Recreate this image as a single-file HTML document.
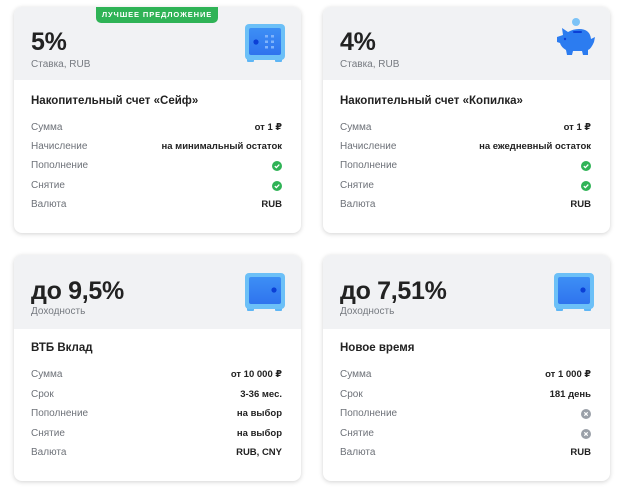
<!DOCTYPE html>
<html><head><meta charset="utf-8"><style>
*{margin:0;padding:0;box-sizing:border-box}
body{width:626px;height:494px;background:#fff;font-family:"Liberation Sans","DejaVu Sans",sans-serif;position:relative;overflow:hidden;color:#222}
.card{position:absolute;width:287px;height:226px;border-radius:8px;background:#fff;box-shadow:0 1px 5px rgba(0,0,0,.18);overflow:hidden}
.hd{position:absolute;left:0;top:0;right:0;height:73px;background:#f1f2f4}
.big{position:absolute;left:17px;font-weight:bold;font-size:25px;color:#222;letter-spacing:-.3px}
.sub{position:absolute;left:17px;font-size:10px;color:#767a80}
.ttl{position:absolute;left:17px;font-size:11.5px;font-weight:bold;color:#222}
.row{position:absolute;left:17px;right:19px;height:14px;font-size:10px}
.row .l{position:absolute;left:0;color:#6d7178}
.row .r{position:absolute;right:0;font-weight:bold;font-size:9.5px;color:#222}
.ic{position:absolute;right:0;top:1px}
.badge{position:absolute;left:82px;top:0;width:122px;height:16px;background:#2fb356;border-radius:0 0 5px 5px;color:#fff;font-size:7.5px;font-weight:bold;letter-spacing:.9px;text-align:center;line-height:16px}
</style></head><body>
<svg width="0" height="0" style="position:absolute"><defs>
<linearGradient id="g1" x1="0" y1="0" x2="0" y2="1"><stop offset="0" stop-color="#3d8ff5"/><stop offset="1" stop-color="#2f74ee"/></linearGradient>
<symbol id="ok" viewBox="0 0 10 10"><circle cx="5" cy="5" r="5" fill="#2fb356"/><path d="M2.8 5.1 L4.4 6.6 L7.3 3.6" stroke="#fff" stroke-width="1.3" fill="none"/></symbol>
<symbol id="no" viewBox="0 0 10 10"><circle cx="5" cy="5" r="5" fill="#9aa0a8"/><path d="M3.3 3.3 L6.7 6.7 M6.7 3.3 L3.3 6.7" stroke="#fff" stroke-width="1.2"/></symbol>
</defs></svg>

<div class="card" style="left:14px;top:7px">
 <div class="hd"></div>
 <div class="badge">ЛУЧШЕЕ ПРЕДЛОЖЕНИЕ</div>
 <div class="big" style="top:21px">5%</div>
 <div class="sub" style="top:52px">Ставка, RUB</div>
 <svg style="position:absolute;left:231px;top:17px" width="40" height="38" viewBox="0 0 40 38"><rect x="2" y="34" width="7" height="4" rx="1" fill="#5eb6f5"/><rect x="30" y="34" width="7" height="4" rx="1" fill="#5eb6f5"/><rect x="0" y="0" width="40" height="36" rx="4" fill="#6cc0f7"/><rect x="4" y="4" width="32" height="27" rx="2" fill="url(#g1)"/><circle cx="11" cy="18" r="2.6" fill="#0b3fd6"/><g fill="#7fb3fb"><rect x="20" y="11" width="3" height="2.5"/><rect x="26" y="11" width="3" height="2.5"/><rect x="20" y="16.5" width="3" height="2.5"/><rect x="26" y="16.5" width="3" height="2.5"/><rect x="20" y="22" width="3" height="2.5"/><rect x="26" y="22" width="3" height="2.5"/></g></svg>
 <div class="ttl" style="top:88px">Накопительный счет «Сейф»</div>
 <div class="row" style="top:115px"><span class="l">Сумма</span><span class="r">от 1 ₽</span></div>
 <div class="row" style="top:134px"><span class="l">Начисление</span><span class="r">на минимальный остаток</span></div>
 <div class="row" style="top:153px"><span class="l">Пополнение</span><svg class="ic" width="10" height="10"><use href="#ok"/></svg></div>
 <div class="row" style="top:173px"><span class="l">Снятие</span><svg class="ic" width="10" height="10"><use href="#ok"/></svg></div>
 <div class="row" style="top:192px"><span class="l">Валюта</span><span class="r">RUB</span></div>
</div>

<div class="card" style="left:323px;top:7px">
 <div class="hd"></div>
 <div class="big" style="top:21px">4%</div>
 <div class="sub" style="top:52px">Ставка, RUB</div>
 <svg style="position:absolute;left:232px;top:10px" width="40" height="40" viewBox="0 0 40 40"><circle cx="21" cy="5" r="4" fill="#7cc3f7"/><path d="M8 18 L7 11 L13 15 Q18 12 24 12 Q35 12 36 22 L40 20 L39 25 Q36 32 33 33 L33 38 L28 38 L27 34 L18 34 L17 38 L12 38 L11 33 Q6 30 5 26 L2 25 L2 20 Z" fill="#2c7cf0"/><rect x="18" y="14" width="9" height="2" rx="1" fill="#0b3fd6"/><circle cx="10" cy="22" r="1.2" fill="#0b3fd6"/></svg>
 <div class="ttl" style="top:88px">Накопительный счет «Копилка»</div>
 <div class="row" style="top:115px"><span class="l">Сумма</span><span class="r">от 1 ₽</span></div>
 <div class="row" style="top:134px"><span class="l">Начисление</span><span class="r">на ежедневный остаток</span></div>
 <div class="row" style="top:153px"><span class="l">Пополнение</span><svg class="ic" width="10" height="10"><use href="#ok"/></svg></div>
 <div class="row" style="top:173px"><span class="l">Снятие</span><svg class="ic" width="10" height="10"><use href="#ok"/></svg></div>
 <div class="row" style="top:192px"><span class="l">Валюта</span><span class="r">RUB</span></div>
</div>

<div class="card" style="left:14px;top:255px">
 <div class="hd" style="height:74px"></div>
 <div class="big" style="top:22px">до 9,5%</div>
 <div class="sub" style="top:51px">Доходность</div>
 <svg style="position:absolute;left:231px;top:18px" width="40" height="38" viewBox="0 0 40 38"><rect x="2" y="34" width="7" height="4" rx="1" fill="#5eb6f5"/><rect x="30" y="34" width="7" height="4" rx="1" fill="#5eb6f5"/><rect x="0" y="0" width="40" height="36" rx="4" fill="#6cc0f7"/><rect x="4" y="4" width="32" height="27" rx="2" fill="url(#g1)"/><circle cx="29" cy="17" r="2.6" fill="#0b3fd6"/></svg>
 <div class="ttl" style="top:87px">ВТБ Вклад</div>
 <div class="row" style="top:114px"><span class="l">Сумма</span><span class="r">от 10 000 ₽</span></div>
 <div class="row" style="top:134px"><span class="l">Срок</span><span class="r">3-36 мес.</span></div>
 <div class="row" style="top:153px"><span class="l">Пополнение</span><span class="r">на выбор</span></div>
 <div class="row" style="top:173px"><span class="l">Снятие</span><span class="r">на выбор</span></div>
 <div class="row" style="top:192px"><span class="l">Валюта</span><span class="r">RUB, CNY</span></div>
</div>

<div class="card" style="left:323px;top:255px">
 <div class="hd" style="height:74px"></div>
 <div class="big" style="top:22px">до 7,51%</div>
 <div class="sub" style="top:51px">Доходность</div>
 <svg style="position:absolute;left:231px;top:18px" width="40" height="38" viewBox="0 0 40 38"><rect x="2" y="34" width="7" height="4" rx="1" fill="#5eb6f5"/><rect x="30" y="34" width="7" height="4" rx="1" fill="#5eb6f5"/><rect x="0" y="0" width="40" height="36" rx="4" fill="#6cc0f7"/><rect x="4" y="4" width="32" height="27" rx="2" fill="url(#g1)"/><circle cx="29" cy="17" r="2.6" fill="#0b3fd6"/></svg>
 <div class="ttl" style="top:87px">Новое время</div>
 <div class="row" style="top:114px"><span class="l">Сумма</span><span class="r">от 1 000 ₽</span></div>
 <div class="row" style="top:134px"><span class="l">Срок</span><span class="r">181 день</span></div>
 <div class="row" style="top:153px"><span class="l">Пополнение</span><svg class="ic" width="10" height="10"><use href="#no"/></svg></div>
 <div class="row" style="top:173px"><span class="l">Снятие</span><svg class="ic" width="10" height="10"><use href="#no"/></svg></div>
 <div class="row" style="top:192px"><span class="l">Валюта</span><span class="r">RUB</span></div>
</div>
</body></html>
